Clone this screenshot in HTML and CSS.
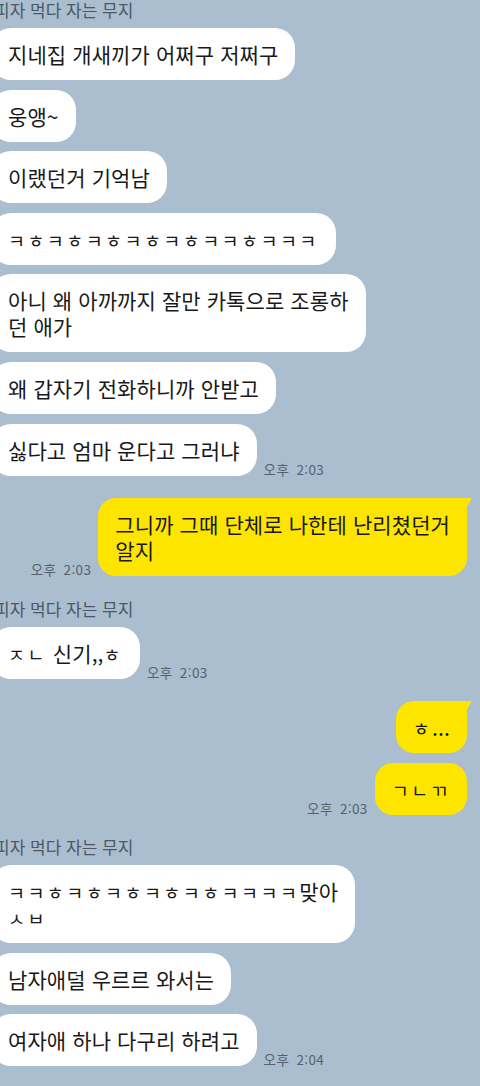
FILE: index.html
```html
<!DOCTYPE html>
<html lang="ko">
<head>
<meta charset="utf-8">
<title>채팅</title>
<link rel="stylesheet" href="styles.css">
</head>
<body>
<div class="chat">
  <div class="group in">
    <div class="name">피자 먹다 자는 무지</div>
    <div class="row"><div class="bubble">지네집 개새끼가 어쩌구 저쩌구</div></div>
    <div class="row"><div class="bubble">웅앵~</div></div>
    <div class="row"><div class="bubble">이랬던거 기억남</div></div>
    <div class="row"><div class="bubble"><span class="jamo">ㅋㅎㅋㅎㅋㅎㅋㅎㅋㅎㅋㅋㅎㅋㅋㅋ</span></div></div>
    <div class="row"><div class="bubble">아니 왜 아까까지 잘만 카톡으로 조롱하<br>던 애가</div></div>
    <div class="row"><div class="bubble">왜 갑자기 전화하니까 안받고</div></div>
    <div class="row"><div class="bubble">싫다고 엄마 운다고 그러냐</div><span class="time">오후 2:03</span></div>
  </div>
  <div class="group out">
    <div class="row"><span class="time">오후 2:03</span><div class="bubble me tail">그니까 그때 단체로 나한테 난리쳤던거<br>알지</div></div>
  </div>
  <div class="group in">
    <div class="name">피자 먹다 자는 무지</div>
    <div class="row"><div class="bubble"><span class="jamo">ㅈㄴ</span> 신기,,<span class="jamo">ㅎ</span></div><span class="time">오후 2:03</span></div>
  </div>
  <div class="group out">
    <div class="row"><div class="bubble me tail"><span class="jamo">ㅎ</span>...</div></div>
    <div class="row"><span class="time">오후 2:03</span><div class="bubble me"><span class="jamo">ㄱㄴㄲ</span></div></div>
  </div>
  <div class="group in">
    <div class="name">피자 먹다 자는 무지</div>
    <div class="row"><div class="bubble"><span class="jamo">ㅋㅋㅎㅋㅎㅋㅎㅋㅎㅋㅎㅋㅋㅋㅋ</span>맞아<br><span class="jamo">ㅅㅂ</span></div></div>
    <div class="row"><div class="bubble">남자애덜 우르르 와서는</div></div>
    <div class="row"><div class="bubble">여자애 하나 다구리 하려고</div><span class="time">오후 2:04</span></div>
  </div>
</div>
</body>
</html>
```

FILE: styles.css
```css
html, body {
  margin: 0;
  padding: 0;
}

body {
  width: 480px;
  height: 1086px;
  overflow: hidden;
  background: #aabed0;
  font-family: "Noto Sans CJK KR", "Noto Sans", sans-serif;
  color: #191919;
}

.chat {
  display: flex;
  flex-direction: column;
  gap: 22.5px;
  padding: 0 13px 0 0;
}

.group.in {
  margin-left: -9px;
}

.name {
  margin: -1px 0 7px 3px;
  font-size: 17px;
  line-height: 22px;
  color: #4c5866;
  white-space: nowrap;
}

.row {
  display: flex;
  align-items: flex-end;
  gap: 7px;
}

.row + .row {
  margin-top: 9.6px;
}

.group.out .row {
  justify-content: flex-end;
}

.bubble {
  position: relative;
  background: #ffffff;
  border-radius: 20px;
  padding: 13px 17px;
  font-size: 21px;
  line-height: 26px;
  letter-spacing: 0.1px;
  white-space: nowrap;
}

.bubble.me {
  background: #fee500;
  border-radius: 18px;
}

.bubble.tail {
  border-top-right-radius: 5px;
}

.bubble.tail::after {
  content: "";
  position: absolute;
  top: 0;
  right: -5px;
  width: 13px;
  height: 12px;
  background: #fee500;
  clip-path: polygon(0 0, 100% 0, 45% 100%);
}

.jamo {
  font-size: 18.5px;
  line-height: 18px;
  letter-spacing: 2.4px;
}

.time {
  font-size: 13.5px;
  line-height: 14px;
  letter-spacing: 0.4px;
  word-spacing: 3px;
  color: #56616d;
  white-space: nowrap;
}
```
